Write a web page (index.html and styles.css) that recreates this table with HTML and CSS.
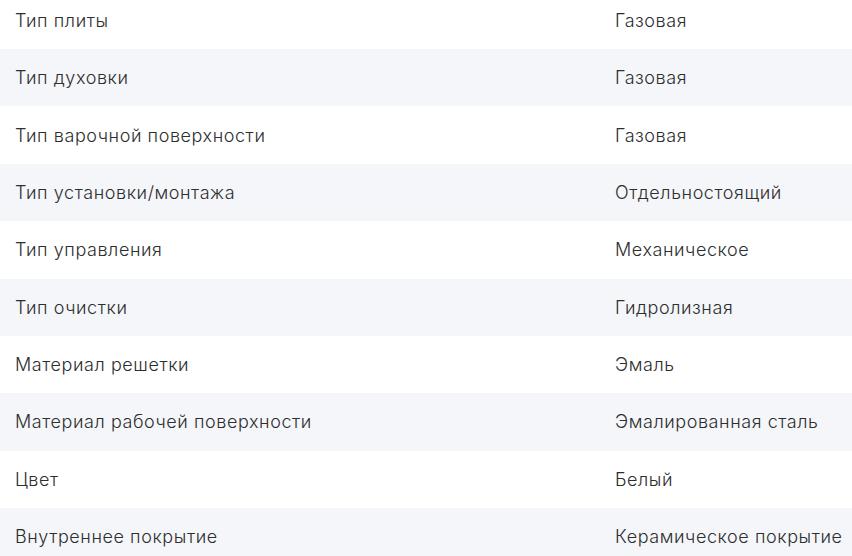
FILE: index.html
```html
<!DOCTYPE html>
<html lang="ru">
<head>
<meta charset="utf-8">
<link rel="stylesheet" href="styles.css">
</head>
<body>
<div class="specs">
  <div class="row"><div class="cell">Тип плиты</div><div class="cell">Газовая</div></div>
  <div class="row alt"><div class="cell">Тип духовки</div><div class="cell">Газовая</div></div>
  <div class="row"><div class="cell">Тип варочной поверхности</div><div class="cell">Газовая</div></div>
  <div class="row alt"><div class="cell">Тип установки/монтажа</div><div class="cell">Отдельностоящий</div></div>
  <div class="row"><div class="cell">Тип управления</div><div class="cell">Механическое</div></div>
  <div class="row alt"><div class="cell">Тип очистки</div><div class="cell">Гидролизная</div></div>
  <div class="row"><div class="cell">Материал решетки</div><div class="cell">Эмаль</div></div>
  <div class="row alt"><div class="cell">Материал рабочей поверхности</div><div class="cell">Эмалированная сталь</div></div>
  <div class="row"><div class="cell">Цвет</div><div class="cell">Белый</div></div>
  <div class="row alt"><div class="cell">Внутреннее покрытие</div><div class="cell">Керамическое покрытие</div></div>
</div>
</body>
</html>
```
FILE: styles.css
```css
html, body {
  margin: 0;
  padding: 0;
  background: #ffffff;
  overflow: hidden;
}
.specs {
  margin-top: -8.375px;
  font-family: Inter, "Noto Sans", sans-serif;
  font-size: 18px;
  font-weight: 300;
  letter-spacing: 0.57px;
  color: #2e2e2e;
}
.row {
  display: grid;
  grid-template-columns: 600px 1fr;
  height: 57.375px;
  align-items: center;
}
.row.alt {
  background: #f5f6fa;
}
.cell {
  padding: 0 15px;
  white-space: nowrap;
}
```
